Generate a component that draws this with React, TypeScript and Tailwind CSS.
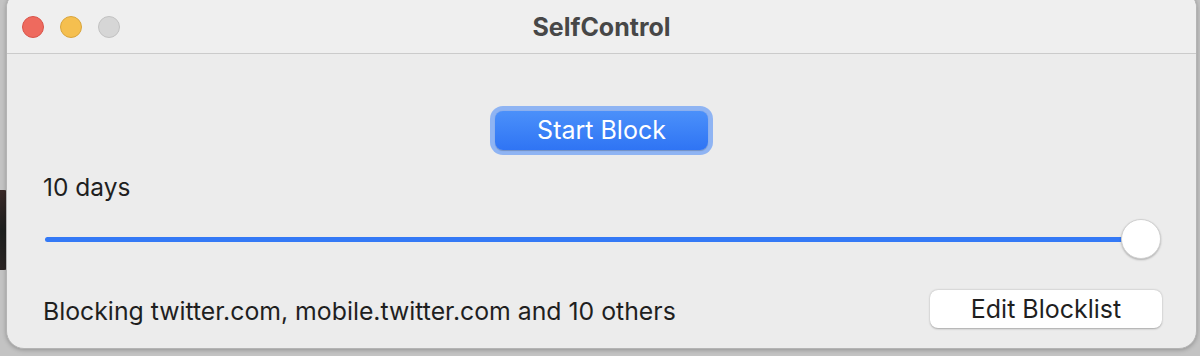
import React from 'react';

export default function App() {
  const font = { fontFamily: 'Inter, "Liberation Sans", sans-serif' };

  return (
    <div className="relative w-[1200px] h-[356px] bg-[#c3c3c3] overflow-hidden" style={font}>
      {/* desktop behind the window */}
      <div className="absolute left-0 top-[190px] w-[8px] h-[80px] rounded-r-[4px] bg-gradient-to-b from-[#3a2a28] via-[#1d1f1e] to-[#2b2524]" />

      {/* window */}
      <div className="absolute left-[6px] top-[-10px] w-[1191px] h-[359px] rounded-[18px] bg-[#ececec] border border-[#b4b4b4] shadow-[0_1px_4px_rgba(0,0,0,0.25)] flex flex-col overflow-hidden">
        {/* title bar */}
        <div className="relative h-[63px] shrink-0 bg-[#efefef] border-b border-[#cbcbcb] flex items-center justify-center pt-[10px]">
          <div className="absolute left-[15px] top-[25px] flex items-center gap-[16px]">
            <span className="w-[22px] h-[22px] rounded-full bg-[#ee6a5e] border border-[#d9544a]" />
            <span className="w-[22px] h-[22px] rounded-full bg-[#f5bf4f] border border-[#d9a53c]" />
            <span className="w-[22px] h-[22px] rounded-full bg-[#d6d6d6] border border-[#c2c2c2]" />
          </div>
          <span className="text-[25px] leading-[30px] font-bold text-[#474747]">SelfControl</span>
        </div>

        {/* content */}
        <div className="flex flex-col flex-1 px-[36px]">
          <div className="flex justify-center mt-[52px]">
            <div className="p-[5px] rounded-[13px] bg-[#8fb4f3]">
              <button className="w-[213px] h-[39px] rounded-[8px] bg-gradient-to-b from-[#4b90fa] to-[#2f74f4] text-white text-[25px] leading-none shadow-[0_0.5px_1px_rgba(0,0,0,0.2)]">
                Start Block
              </button>
            </div>
          </div>

          <div className="mt-[19px] text-[24.5px] text-[#1f1f1f] leading-[26px]">10 days</div>

          <div className="relative mt-[19px] h-[40px] flex items-center">
            <div className="ml-[2px] w-[1098px] h-[5px] rounded-full bg-[#3479f6]" />
            <div className="absolute left-[1078px] top-0 w-[40px] h-[40px] rounded-full bg-white border border-[#d0d0d0] shadow-[0_1px_2px_rgba(0,0,0,0.25)]" />
          </div>

          <div className="mt-[31px] flex items-center justify-between">
            <span className="text-[24.8px] leading-[30px] text-[#1f1f1f] relative top-[2px]">Blocking twitter.com, mobile.twitter.com and 10 others</span>
            <button className="mr-[-2px] w-[232px] h-[38px] rounded-[8px] bg-white text-[25px] leading-none text-[#1f1f1f] shadow-[0_0.5px_2px_rgba(0,0,0,0.3)]">
              Edit Blocklist
            </button>
          </div>
        </div>
      </div>
    </div>
  );
}
